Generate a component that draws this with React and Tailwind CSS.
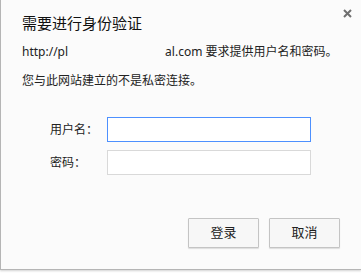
import React from "react";

const font = { fontFamily: '"Noto Sans", "Noto Sans CJK SC", sans-serif' };

const Field = ({ label, focused }) => (
  <div className="flex items-center h-[25px]">
    <span className="w-[57px] text-[12px] leading-[16px] text-[#222]">{label}</span>
    <input
      className={`w-[204px] h-[25px] bg-white outline-none border ${
        focused ? "border-[#4d90fe]" : "border-[#d9d9d9]"
      }`}
    />
  </div>
);

const Button = ({ children }) => (
  <button className="w-[71px] h-[30px] border border-[#c4c4c4] rounded-[1px] bg-[#f7f7f7] text-[13px] text-[#222] shadow-[0_1px_1px_rgba(0,0,0,0.12)]">
    {children}
  </button>
);

export default function App() {
  return (
    <div className="w-[361px] h-[273px] bg-white" style={font}>
      <div className="relative h-[270px] bg-[#fbfbfb] border-l border-b border-[#b5b5b5] shadow-[0_1px_2px_rgba(0,0,0,0.18)] pl-[21px] pr-[21px] pt-[13px]">
        {/* close */}
        <div className="absolute top-[9px] right-[9px] w-[9px] h-[9px]">
          <svg width="9" height="9" viewBox="0 0 9 9">
            <path d="M1 1 L8 8 M8 1 L1 8" stroke="#6f6f6f" strokeWidth="2" />
          </svg>
        </div>

        <h2 className="text-[15px] leading-[20px] text-[#111] font-normal">需要进行身份验证</h2>

        <p className="mt-[11px] text-[12px] leading-[16px] text-[#222] whitespace-nowrap">
          http://pl<span className="inline-block w-[97px]"></span>al.com 要求提供用户名和密码。
        </p>
        <p className="mt-[13px] text-[12px] leading-[16px] text-[#222]">您与此网站建立的不是私密连接。</p>

        <div className="mt-[28px] ml-[28px] flex flex-col gap-[8px]">
          <Field label="用户名：" focused />
          <Field label="密码：" />
        </div>

        <div className="mt-[43px] flex justify-end gap-[10px]">
          <Button>登录</Button>
          <Button>取消</Button>
        </div>
      </div>
    </div>
  );
}
